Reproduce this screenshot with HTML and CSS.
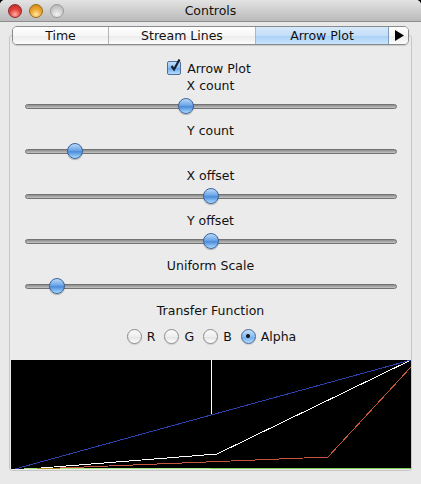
FILE: index.html
```html
<!DOCTYPE html>
<html lang="en">
<head>
    <meta charset="UTF-8">
    <meta name="viewport" content="width=device-width, initial-scale=1.0">
    <title>Controls</title>
    <link rel="stylesheet" href="styles.css">
</head>
<body>
    <div class="window">
        <div class="titlebar">
            <div class="lights">
                <span class="light red"></span>
                <span class="light amber"></span>
                <span class="light off"></span>
            </div>
            <span class="title">Controls</span>
        </div>

        <div class="tabs">
            <div class="tab tab-time">Time</div>
            <div class="tab tab-stream">Stream Lines</div>
            <div class="tab tab-arrow selected">Arrow Plot</div>
            <div class="tab tab-more">
                <svg width="10" height="11" viewBox="0 0 10 11"><polygon points="1,0 10,5.5 1,11" fill="#000"/></svg>
            </div>
        </div>

        <div class="pane">
            <label class="check-row">
                <span class="checkbox">
                    <svg width="12" height="13" viewBox="0 0 12 13"><path d="M2.5 7 L5 10.5 L10.5 0.5" fill="none" stroke="#152238" stroke-width="2.2"/></svg>
                </span>
                Arrow Plot
            </label>

            <div class="field">
                <div class="label">X count</div>
                <div class="slider"><div class="track"></div><div class="thumb" style="left: 153px"></div></div>
            </div>
            <div class="field">
                <div class="label">Y count</div>
                <div class="slider"><div class="track"></div><div class="thumb" style="left: 42px"></div></div>
            </div>
            <div class="field">
                <div class="label">X offset</div>
                <div class="slider"><div class="track"></div><div class="thumb" style="left: 178px"></div></div>
            </div>
            <div class="field">
                <div class="label">Y offset</div>
                <div class="slider"><div class="track"></div><div class="thumb" style="left: 178px"></div></div>
            </div>
            <div class="field">
                <div class="label">Uniform Scale</div>
                <div class="slider"><div class="track"></div><div class="thumb" style="left: 24px"></div></div>
            </div>

            <div class="label">Transfer Function</div>
            <div class="radios">
                <span class="radio"><span class="dot"></span>R</span>
                <span class="radio"><span class="dot"></span>G</span>
                <span class="radio"><span class="dot"></span>B</span>
                <span class="radio checked"><span class="dot"></span>Alpha</span>
            </div>

            <div class="graph">
                <svg width="400" height="109" viewBox="0 0 400 109" shape-rendering="crispEdges">
                    <rect x="0" y="0" width="400" height="109" fill="#000"/>
                    <line x1="200" y1="0" x2="200" y2="55" stroke="#fff" stroke-width="1"/>
                    <line x1="13" y1="108.5" x2="200" y2="108.5" stroke="#a6e27e" stroke-width="1"/>
                    <line x1="200" y1="108.5" x2="400" y2="108.5" stroke="#7ccc52" stroke-width="1"/>
                    <line x1="26" y1="108.5" x2="49" y2="108.5" stroke="#a88f22" stroke-width="1"/>
                    <polyline points="49,108 317,97 400,7" fill="none" stroke="#c8553f" stroke-width="1"/>
                    <polyline points="30,108 206,94 400,0" fill="none" stroke="#fff" stroke-width="1"/>
                    <line x1="4" y1="109" x2="400" y2="0" stroke="#2c40b0" stroke-width="1"/>
                </svg>
            </div>
        </div>
    </div>
</body>
</html>
```

FILE: styles.css
```css
body {
    margin: 0;
    padding: 0;
    background-color: #000;
    font-family: 'DejaVu Sans', 'Liberation Sans', sans-serif;
    font-size: 12.5px;
    color: #111;
}

.window {
    min-height: 100vh;
    background-color: #e9e9e9;
    border-radius: 5px 5px 0 0;
    overflow: hidden;
}

.titlebar {
    height: 21px;
    border-bottom: 1px solid #8e8e8e;
    background: linear-gradient(#e3e3e3, #bababa);
    display: flex;
    align-items: center;
    position: relative;
}

.lights {
    display: flex;
    gap: 7px;
    padding-left: 8px;
}

.light {
    width: 12px;
    height: 12px;
    border-radius: 50%;
}

.light.red {
    border: 1px solid #8e2b2b;
    background: radial-gradient(circle at 50% 78%, #ffb0a8 0%, #e3463e 45%, #b5241f 100%);
}

.light.amber {
    border: 1px solid #9c6a1c;
    background: radial-gradient(circle at 50% 78%, #ffe9a8 0%, #eeaa34 45%, #c57e14 100%);
}

.light.off {
    border: 1px solid #9a9a9a;
    background: radial-gradient(circle at 50% 78%, #f2f2f2 0%, #cfcfcf 50%, #ababab 100%);
}

.title {
    position: absolute;
    left: 0;
    right: 0;
    text-align: center;
    pointer-events: none;
}

.tabs {
    position: relative;
    z-index: 1;
    display: flex;
    margin: 4px 0 0 12px;
    width: 397px;
    height: 19px;
    box-sizing: border-box;
    border: 1px solid #8b8b8b;
    border-radius: 5px;
    overflow: hidden;
    box-shadow: 0 1px 1px rgba(0, 0, 0, 0.15);
}

.tab {
    display: flex;
    align-items: center;
    justify-content: center;
    background: linear-gradient(#ffffff 0%, #f6f6f6 50%, #ececec 52%, #fbfbfb 100%);
    border-right: 1px solid #b4b4b4;
    line-height: 17px;
}

.tab-time {
    width: 95px;
}

.tab-stream {
    width: 146px;
}

.tab-arrow {
    width: 132px;
}

.tab-more {
    flex: 1;
    border-right: none;
}

.tab.selected {
    background: linear-gradient(#d6e9fb 0%, #c3def8 50%, #a9d0f5 52%, #c9e4fc 100%);
    border-right-color: #7d9cbd;
}

.pane {
    margin: -10px 0 0 9px;
    width: 403px;
    box-sizing: border-box;
    border: 1px solid #c6c6c6;
    border-radius: 3px;
    background-color: #ebebeb;
    padding: 23px 0 1px;
    text-align: center;
}

.check-row {
    display: flex;
    justify-content: center;
    align-items: center;
    gap: 6px;
    height: 18px;
    padding-right: 3px;
}

.checkbox {
    width: 12px;
    height: 12px;
    border: 1px solid #4c6f9c;
    border-radius: 2px;
    background: linear-gradient(#c6e0fa 0%, #8dbdf0 50%, #6ea9ea 52%, #b5dcff 100%);
    position: relative;
}

.checkbox svg {
    position: absolute;
    left: 1px;
    top: -3px;
}

.label {
    height: 17px;
    line-height: 17px;
}

.field {
    margin-bottom: 2px;
}

.slider {
    position: relative;
    height: 26px;
    margin: 0 14px 0 15px;
}

.track {
    position: absolute;
    left: 0;
    right: 0;
    top: 10px;
    height: 3px;
    border: 1px solid #727272;
    border-radius: 3px;
    background: linear-gradient(#8c8c8c, #c4c4c4);
}

.thumb {
    position: absolute;
    top: 4px;
    width: 14px;
    height: 14px;
    border: 1px solid #3d639a;
    border-radius: 50%;
    background: linear-gradient(#b9d9fa 0%, #6da6e6 45%, #4b8bdb 55%, #a8dcff 100%);
    box-shadow: 0 1px 1px rgba(0, 0, 0, 0.25);
}

.radios {
    display: flex;
    justify-content: center;
    align-items: center;
    gap: 9px;
    height: 18px;
    margin: 8px 0 15px;
    padding-left: 2px;
}

.radio {
    display: flex;
    align-items: center;
    gap: 5px;
}

.radio .dot {
    width: 13px;
    height: 13px;
    border: 1px solid #8c8c8c;
    border-radius: 50%;
    background: linear-gradient(#fbfbfb 0%, #eeeeee 50%, #e2e2e2 52%, #ffffff 100%);
    box-shadow: 0 1px 1px rgba(0, 0, 0, 0.12);
    position: relative;
}

.radio.checked .dot {
    border-color: #48699a;
    background: linear-gradient(#c6e0fa 0%, #8dbdf0 50%, #6ea9ea 52%, #b5dcff 100%);
}

.radio.checked .dot::after {
    content: "";
    position: absolute;
    left: 4.5px;
    top: 4.5px;
    width: 4px;
    height: 4px;
    border-radius: 50%;
    background-color: #111;
}

.graph {
    height: 109px;
    margin-left: 1px;
}

.graph svg {
    display: block;
}
```
